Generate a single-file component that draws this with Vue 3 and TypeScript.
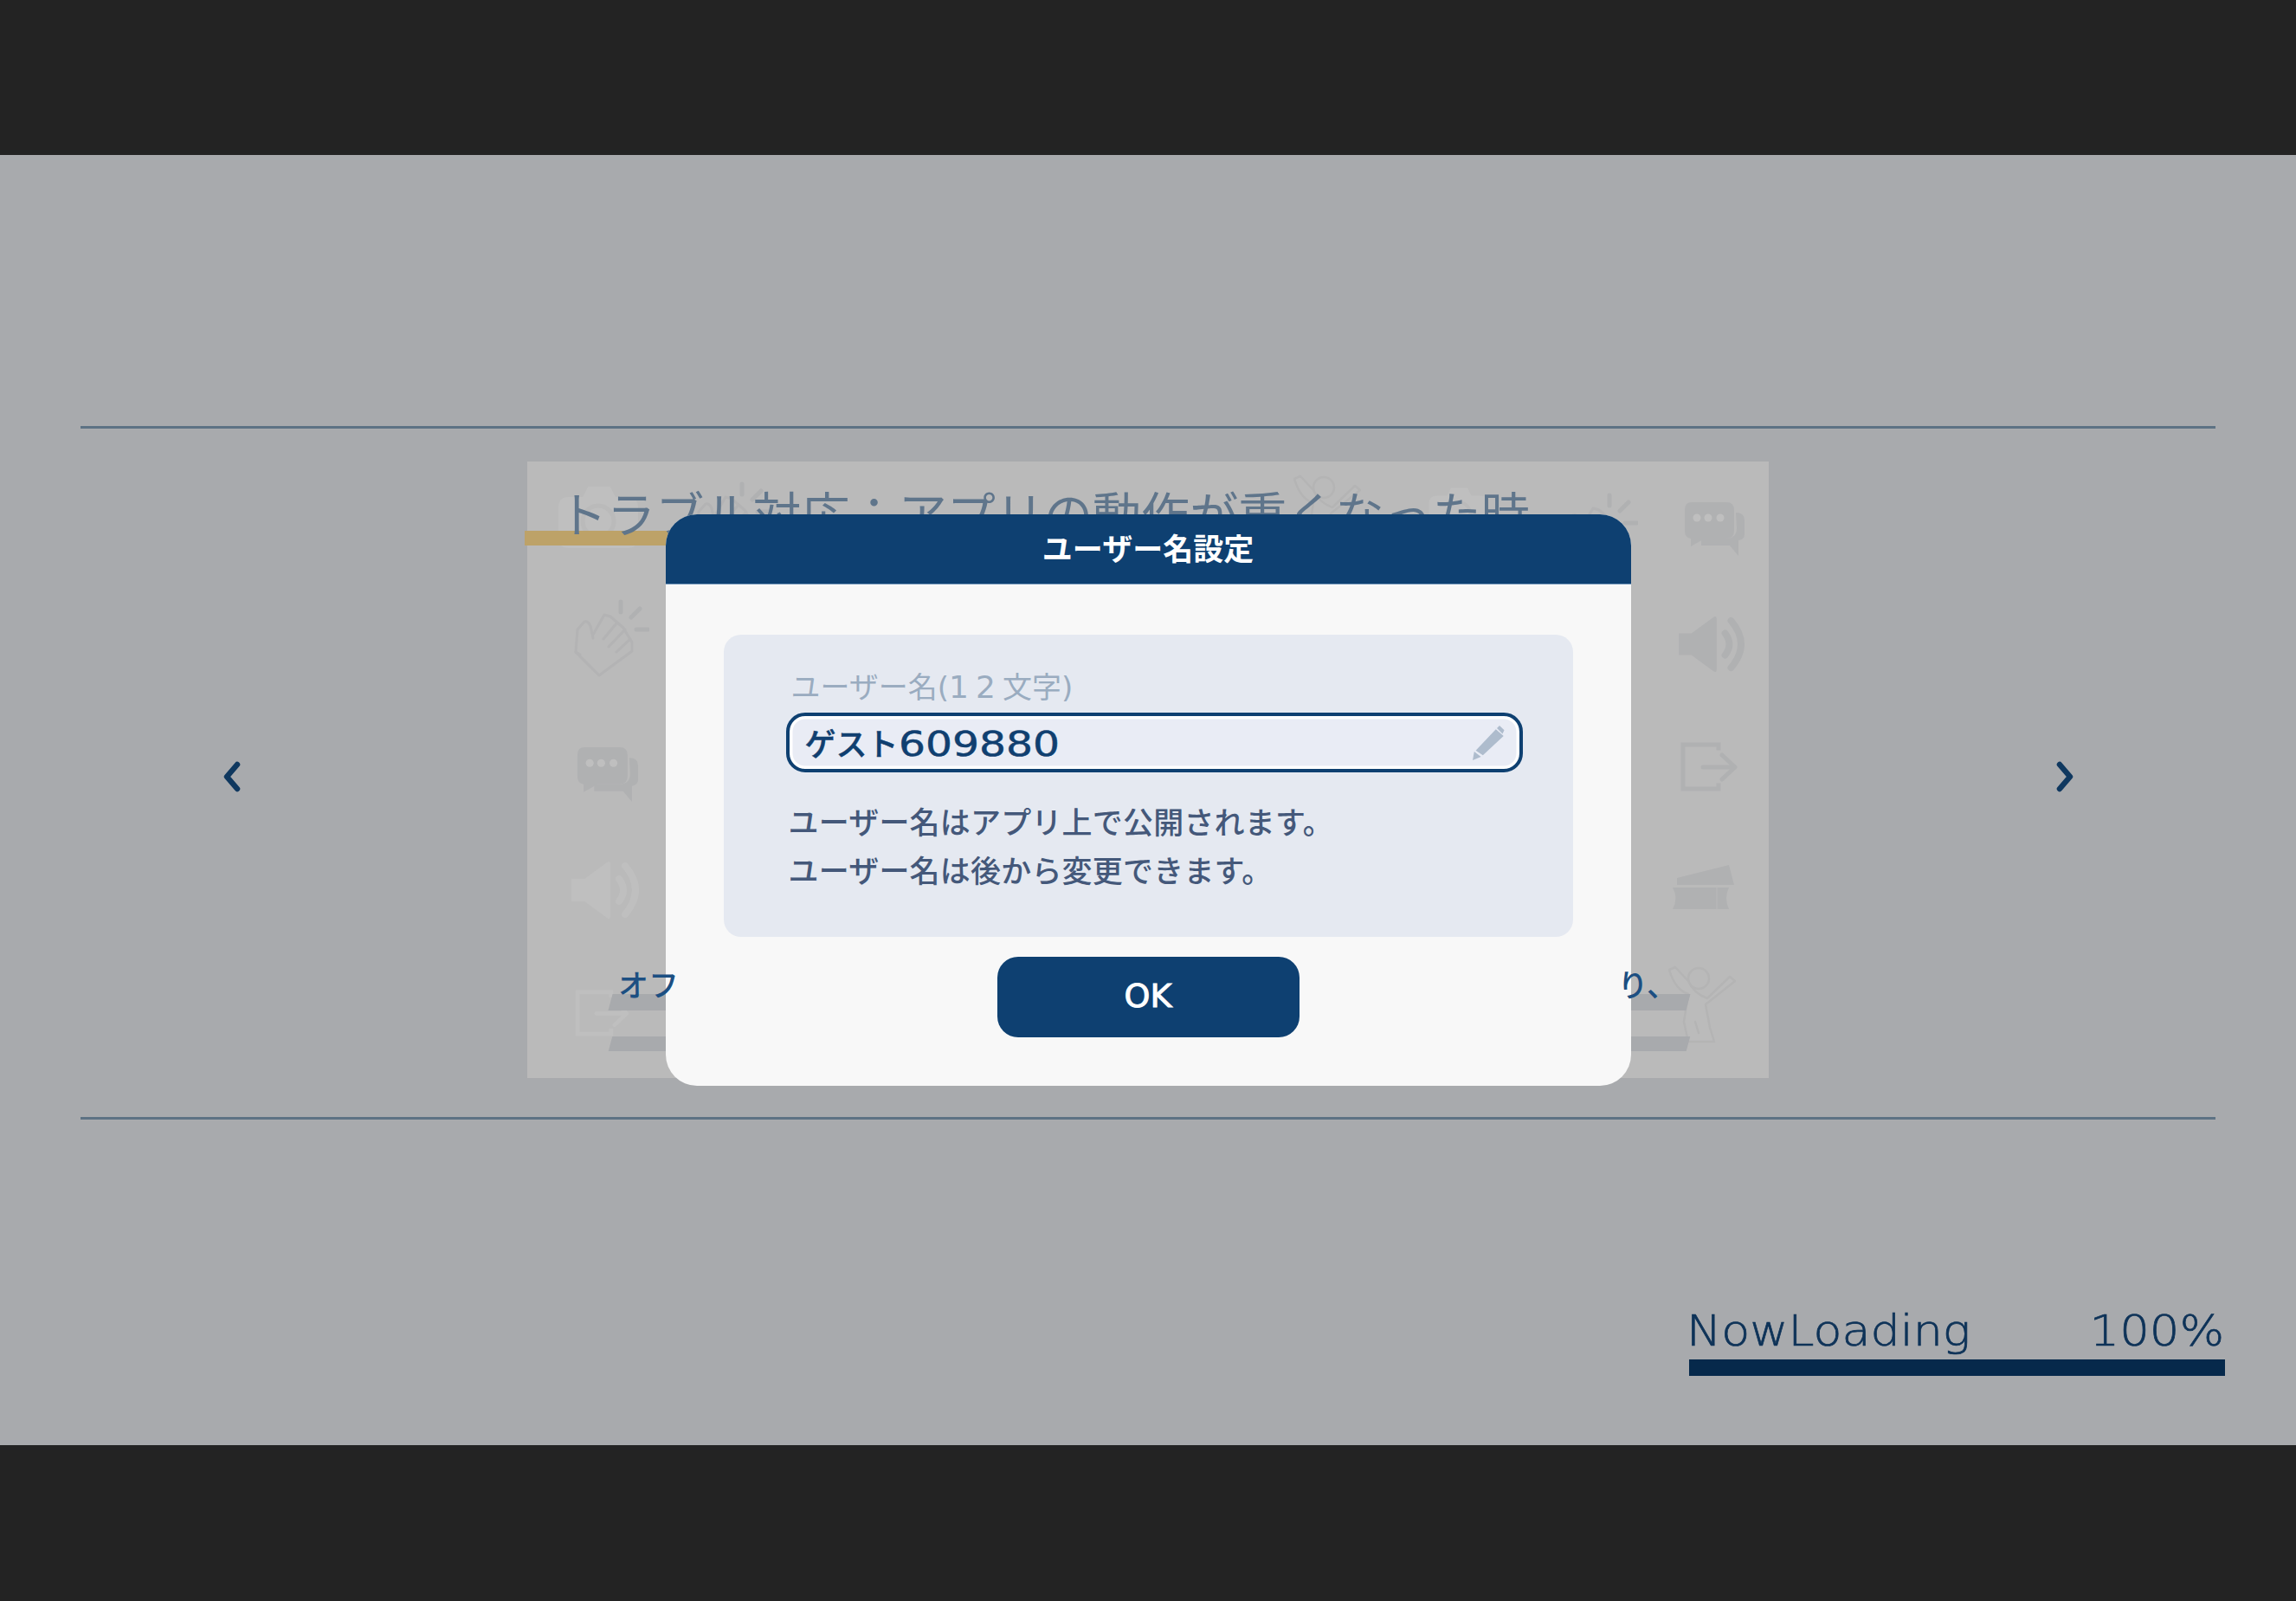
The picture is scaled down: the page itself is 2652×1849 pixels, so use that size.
<script setup lang="ts">
// Username dialog over the tutorial slide, with the loading bar behind it

interface DecoIcon {
  name: 'camera' | 'clap' | 'chat' | 'speaker' | 'exit' | 'books' | 'person'
  x: number
  y: number
  w: number
  h: number
  light?: boolean
}

const decoIcons: DecoIcon[] = [
  { name: 'camera', x: 34, y: 29, w: 94, h: 71, light: true },
  { name: 'clap', x: 191, y: 21, w: 90, h: 92 },
  { name: 'person', x: 885, y: 15, w: 78, h: 94 },
  { name: 'camera', x: 1040, y: 27, w: 70, h: 60, light: true },
  { name: 'clap', x: 1193, y: 34, w: 90, h: 92 },
  { name: 'clap', x: 51, y: 157, w: 90, h: 92 },
  { name: 'chat', x: 56, y: 329, w: 75, h: 65 },
  { name: 'speaker', x: 51, y: 461, w: 80, h: 68, light: true },
  { name: 'exit', x: 54, y: 610, w: 65, h: 54, light: true },
  { name: 'chat', x: 1336, y: 46, w: 72, h: 64 },
  { name: 'speaker', x: 1329, y: 178, w: 80, h: 66 },
  { name: 'exit', x: 1332, y: 324, w: 66, h: 57 },
  { name: 'books', x: 1322, y: 466, w: 72, h: 52 },
  { name: 'person', x: 1318, y: 582, w: 78, h: 94 },
]

const noticeLines = [
  'ユーザー名はアプリ上で公開されます。',
  'ユーザー名は後から変更できます。',
]
</script>

<template>
  <div class="screen">
    <div class="letterbox" />

    <main class="stage">
      <svg class="sprites" aria-hidden="true">
        <defs>
          <symbol id="ico-camera" viewBox="0 0 94 71">
            <path fill="currentColor" d="M14 12h16l6-12h26l6 12h14q12 0 12 12v35q0 12-12 12H14Q2 71 2 59V24q0-12 12-12z" />
            <circle cx="48" cy="40" r="18" fill="none" stroke="#f8f8f8" stroke-width="5" />
          </symbol>
          <symbol id="ico-clap" viewBox="0 0 90 92">
            <g fill="none" stroke="#efeff0" stroke-width="3" stroke-linecap="round" stroke-linejoin="round">
              <path d="M25 47 22 33q-3-6-7-5l-8 9-2 26 27 27 38-28V52L60 35l-15-13-7-2-13 23" />
              <path d="M5 63 10 66M37 48 52 30M43 57 62 37M52 63 68 48" />
            </g>
            <g fill="none" stroke="#ebecee" stroke-width="5" stroke-linecap="round">
              <path d="M57 5v12M69 23 79 13M75 37h14" />
            </g>
          </symbol>
          <symbol id="ico-chat" viewBox="0 0 72 64">
            <path fill="currentColor" d="M9 1h40q9 0 9 9v24q0 9-9 9H24L8 52V43q-7-1-7-9V10q0-9 8-9z" />
            <path fill="currentColor" d="M60 13q10 0 10 9v16q0 6-7 7v18L53 51H20v-8h30q11-1 11-12z" />
            <g fill="#ffffff">
              <circle cx="15" cy="19" r="4.5" />
              <circle cx="28" cy="19" r="4.5" />
              <circle cx="42" cy="19" r="4.5" />
            </g>
          </symbol>
          <symbol id="ico-speaker" viewBox="0 0 80 68">
            <path fill="currentColor" d="M0 21h15L41 2q4-3 4 3v58q0 6-4 3L15 47H0z" />
            <g fill="none" stroke="currentColor" stroke-width="8" stroke-linecap="round">
              <path d="M55 21q10 13 0 26" />
              <path d="M62 6q24 28 0 56" />
            </g>
          </symbol>
          <symbol id="ico-exit" viewBox="0 0 66 57">
            <g fill="none" stroke="currentColor" stroke-width="5" stroke-linecap="square">
              <path d="M44 7V3H3v51h41v-4" />
            </g>
            <g fill="none" stroke="currentColor" stroke-width="5" stroke-linecap="round" stroke-linejoin="round">
              <path d="M26 29h36M48 15l15 14-15 14" />
            </g>
          </symbol>
          <symbol id="ico-books" viewBox="0 0 72 52">
            <path fill="currentColor" d="M6 23v-8L66 0l6 23z" />
            <path fill="currentColor" d="M1 26h65q-6 12 0 25H1q7-13 0-25z" />
            <path fill="none" stroke="#f4f4f5" stroke-width="1.5" d="M52 26v25" />
          </symbol>
          <symbol id="ico-person" viewBox="0 0 78 94">
            <g stroke="#f0f0f1" stroke-width="2.5" stroke-linejoin="round" stroke-linecap="round">
              <circle cx="35" cy="15" r="12" fill="none" />
              <path fill="#fafafa" d="M1 5 8 2 23 18q6 14 22 20L71 13l6 5-34 27 5 27 5 16H23L18 65 23 33Q8 28 1 5z" />
              <path fill="none" d="M31 65l4 13" />
            </g>
          </symbol>
        </defs>
      </svg>

      <section class="carousel">
        <button class="nav nav--prev" type="button" aria-label="前へ">
          <svg viewBox="0 0 20 36" width="20" height="36">
            <path d="M16 4 4 18l12 14" />
          </svg>
        </button>

        <article class="slide">
          <div class="slide-deco">
            <svg
              v-for="(icon, i) in decoIcons"
              :key="i"
              class="deco"
              :class="{ 'deco--light': icon.light }"
              :style="{ left: `${icon.x}px`, top: `${icon.y}px`, width: `${icon.w}px`, height: `${icon.h}px` }"
            >
              <use :href="`#ico-${icon.name}`" />
            </svg>
          </div>
          <div class="slide-rule" />
          <h2 class="slide-title">トラブル対応：アプリの動作が重くなった時</h2>
          <div class="slide-copy">
            <div class="copy-line">
              <span>オフ</span>
              <span>り、</span>
            </div>
            <div class="copy-mark copy-mark--first" />
            <div class="copy-mark copy-mark--second" />
          </div>
        </article>

        <button class="nav nav--next" type="button" aria-label="次へ">
          <svg viewBox="0 0 20 36" width="20" height="36">
            <path d="M4 4l12 14L4 32" />
          </svg>
        </button>
      </section>

      <div class="loader">
        <div class="loader-labels">
          <span class="loader-name">NowLoading</span>
          <span class="loader-pct">100%</span>
        </div>
        <div class="loader-track" />
      </div>

      <div class="overlay">
        <div class="dialog" role="dialog">
          <header class="dialog-head">ユーザー名設定</header>
          <div class="dialog-body">
            <div class="form-panel">
              <div class="field-label">ユーザー名(<span class="field-limit">12</span>文字)</div>
              <div class="field">
                <span class="field-value">ゲスト<span class="field-digits">609880</span></span>
                <svg class="field-pencil" viewBox="0 0 37 40" width="37" height="40">
                  <path d="M0 40 1.8 30l7.8 6z" />
                  <path d="M3.6 28.7 26.8 4.3l8.9 7.7-23.9 22.3z" />
                  <path d="M28 3l3-3 5.5 5.3-2 4.2z" />
                </svg>
              </div>
              <p v-for="line in noticeLines" :key="line" class="notice">{{ line }}</p>
            </div>
            <button class="ok-btn" type="button">OK</button>
          </div>
        </div>
      </div>
    </main>

    <div class="letterbox letterbox--bottom" />
  </div>
</template>

<style scoped>
.screen {
  display: flex;
  flex-direction: column;
  width: 2652px;
  height: 1849px;
  background: #232323;
  font-family: "DejaVu Sans", "Noto Sans CJK JP", sans-serif;
}

.letterbox {
  flex: 0 0 179px;
  background: #232323;
}

.letterbox--bottom {
  flex: 1;
}

.stage {
  position: relative;
  flex: 0 0 1490px;
  display: flex;
  flex-direction: column;
  padding-top: 313px;
  box-sizing: border-box;
  background: #e1e3e7;
  overflow: hidden;
}

.sprites {
  position: absolute;
  width: 0;
  height: 0;
}

/* ===== Carousel ===== */
.carousel {
  display: grid;
  grid-template-columns: 1fr 1434px 1fr;
  align-items: start;
  margin: 0 93px;
  height: 801px;
  padding-top: 38px;
  box-sizing: border-box;
  border-top: 3px solid #7d98b0;
  border-bottom: 3px solid #7d98b0;
}

.nav {
  display: flex;
  width: 20px;
  height: 36px;
  margin-top: 346px;
  padding: 0;
  border: none;
  background: transparent;
}

.nav path {
  fill: none;
  stroke: #154b7f;
  stroke-width: 6.5;
  stroke-linecap: round;
  stroke-linejoin: round;
}

.nav--prev {
  justify-self: start;
  margin-left: 165px;
}

.nav--next {
  justify-self: end;
  margin-right: 164px;
}

.slide {
  position: relative;
  display: flex;
  flex-direction: column;
  height: 712px;
  background: #f8f8f8;
}

.slide-deco {
  position: absolute;
  inset: 0;
}

.deco {
  position: absolute;
  color: #ebecee;
}

.deco--light {
  color: #ffffff;
}

.slide-rule {
  position: absolute;
  left: -3px;
  top: 80px;
  width: 900px;
  height: 17px;
  background: #fcd98b;
}

.slide-title {
  position: relative;
  margin: 35px 0 0 36px;
  font-size: 56.1px;
  line-height: 1;
  font-weight: 400;
  color: #7f9cba;
  white-space: nowrap;
}

.slide-copy {
  position: relative;
  width: 1245px;
  margin: auto 0 31px 96px;
}

.copy-line {
  position: relative;
  z-index: 1;
  display: flex;
  justify-content: space-between;
  height: 40px;
  padding: 0 13px 0 9px;
  font-size: 35px;
  font-weight: 500;
  line-height: 42px;
  color: #1c4f82;
}

.copy-mark {
  background: #e1e3e7;
  transform: skewX(-15deg);
}

.copy-mark--first {
  height: 19px;
  margin-top: -10px;
}

.copy-mark--second {
  height: 17px;
  margin-top: 30px;
}

/* ===== Loader ===== */
.loader {
  align-self: flex-end;
  width: 619px;
  margin: auto 82px 80px 0;
}

.loader-labels {
  display: flex;
  justify-content: space-between;
  padding: 0 1px 0 0;
  font-size: 49px;
  line-height: 64px;
  font-weight: 200;
  color: #134476;
  -webkit-text-stroke: 0.7px #134476;
}

.loader-name {
  display: inline-block;
  margin-left: -3px;
  transform: scaleX(1.1);
  transform-origin: left center;
}

.loader-pct {
  display: inline-block;
  transform: scaleX(1.11);
  transform-origin: right center;
}

.loader-track {
  height: 19px;
  background: #083765;
}

/* ===== Dialog ===== */
.overlay {
  position: absolute;
  inset: 0;
  display: flex;
  align-items: center;
  justify-content: center;
  background: rgba(0, 0, 0, 0.25);
}

.dialog {
  width: 1115px;
  height: 660px;
  border-radius: 36px;
  background: #f8f8f8;
  overflow: hidden;
}

.dialog-head {
  height: 81px;
  box-sizing: border-box;
  border-bottom: 1px solid #6f93b8;
  background: #0e4071;
  color: #fff;
  font-size: 35px;
  font-weight: 700;
  line-height: 83px;
  text-align: center;
}

.dialog-body {
  display: flex;
  flex-direction: column;
  align-items: center;
  padding-top: 58px;
}

.form-panel {
  width: 981px;
  height: 349px;
  box-sizing: border-box;
  padding: 38px 58px 0 72px;
  border-radius: 20px;
  background: #e5e9f1;
}

.field-label {
  margin: 0 0 6px 6px;
  font-size: 34px;
  line-height: 46px;
  color: #9aacc0;
}

.field-limit {
  font-size: 36px;
  letter-spacing: 8px;
}

.field {
  display: flex;
  align-items: center;
  justify-content: space-between;
  height: 69px;
  box-sizing: border-box;
  margin-bottom: 31px;
  padding: 0 17px 2px 18px;
  border: 4px solid #0e4071;
  border-radius: 22px;
  background: #e9ecf5;
  box-shadow: inset 0 0 0 3.5px #fff;
}

.field-value {
  font-size: 36px;
  font-weight: 500;
  color: #103f70;
  white-space: nowrap;
  -webkit-text-stroke: 0.5px #103f70;
}

.field-digits {
  display: inline-block;
  font-size: 39px;
  transform: scaleX(1.25);
  transform-origin: left center;
}

.field-pencil {
  fill: #aebccd;
  margin-top: 2px;
}

.notice {
  margin: 0 0 0 3px;
  font-size: 35px;
  font-weight: 500;
  letter-spacing: 0.2px;
  line-height: 56px;
  color: #44587a;
  white-space: nowrap;
}

.ok-btn {
  width: 349px;
  height: 93px;
  margin-top: 23px;
  padding: 0 0 3px;
  border: none;
  border-radius: 24px;
  background: #0e4071;
  color: #fff;
  font-family: inherit;
  font-size: 38px;
  -webkit-text-stroke: 1px #fff;
}
</style>

<style>
html,
body {
  margin: 0;
  background: #232323;
  overflow: hidden;
}
</style>
